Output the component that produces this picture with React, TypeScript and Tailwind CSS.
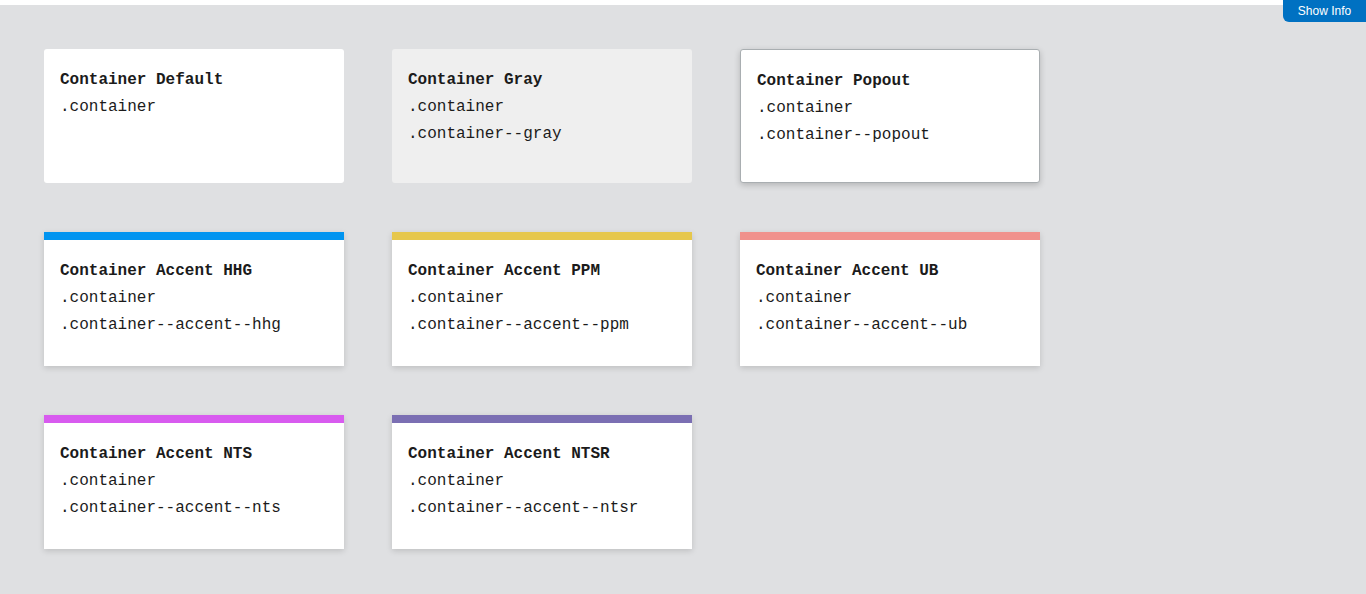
import React from 'react'

type Card = {
  title: string
  classes: string[]
  variant: 'default' | 'gray' | 'popout' | 'accent'
  accent?: string
}

const cards: Card[] = [
  { title: 'Container Default', classes: ['.container'], variant: 'default' },
  { title: 'Container Gray', classes: ['.container', '.container--gray'], variant: 'gray' },
  { title: 'Container Popout', classes: ['.container', '.container--popout'], variant: 'popout' },
  { title: 'Container Accent HHG', classes: ['.container', '.container--accent--hhg'], variant: 'accent', accent: 'bg-[#0094f0]' },
  { title: 'Container Accent PPM', classes: ['.container', '.container--accent--ppm'], variant: 'accent', accent: 'bg-[#e6c74c]' },
  { title: 'Container Accent UB', classes: ['.container', '.container--accent--ub'], variant: 'accent', accent: 'bg-[#f0918c]' },
  { title: 'Container Accent NTS', classes: ['.container', '.container--accent--nts'], variant: 'accent', accent: 'bg-[#d85bef]' },
  { title: 'Container Accent NTSR', classes: ['.container', '.container--accent--ntsr'], variant: 'accent', accent: 'bg-[#7b6fb3]' },
]

function Box({ card }: { card: Card }) {
  const body = (
    <div className="px-4 pt-[18px] pb-4 text-[16px] leading-[27px] text-[#1b1b1b]">
      <div className="font-bold">{card.title}</div>
      {card.classes.map(c => (
        <div key={c}>{c}</div>
      ))}
    </div>
  )

  if (card.variant === 'accent') {
    return (
      <div className="w-[300px] h-[134px] bg-white flex flex-col shadow-[0_2px_6px_rgba(0,0,0,0.15)]">
        <div className={`h-2 shrink-0 ${card.accent}`} />
        {body}
      </div>
    )
  }

  const look =
    card.variant === 'gray'
      ? 'bg-[#efefef] rounded-[3px]'
      : card.variant === 'popout'
        ? 'bg-white rounded-[3px] border border-[#a9aeb1] shadow-[0_2px_6px_rgba(0,0,0,0.2)]'
        : 'bg-white rounded-[3px]'

  return <div className={`w-[300px] h-[134px] ${look}`}>{body}</div>
}

export default function App() {
  return (
    <div className="min-h-[594px] bg-[#dfe0e2] font-['Liberation_Mono',monospace] relative">
      <div className="h-[5px] bg-white" />
      <button className="absolute right-0 top-0 h-[22px] w-[83px] bg-[#0071c2] text-white text-[12px] rounded-bl-[6px] font-['Liberation_Sans',Arial,sans-serif]">
        Show Info
      </button>
      <div className="pt-[44px] pl-[44px] grid grid-cols-[repeat(3,300px)] gap-x-[48px] gap-y-[49px]">
        {cards.map(c => (
          <Box key={c.title} card={c} />
        ))}
      </div>
    </div>
  )
}
